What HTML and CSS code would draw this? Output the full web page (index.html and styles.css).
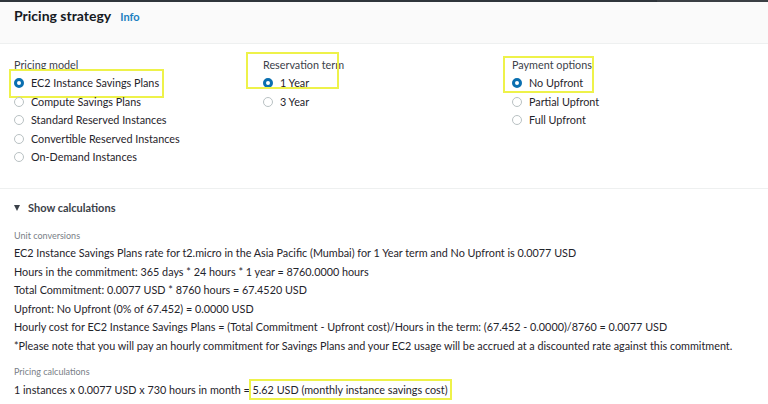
FILE: index.html
```html
<!DOCTYPE html>
<html>
<head>
<meta charset="utf-8">
<link rel="stylesheet" href="styles.css">
</head>
<body>
<div class="topbar"><span class="topbar-end"></span></div>
<div class="page">
  <div class="main">
    <header class="head">
      <h2 class="title">Pricing strategy</h2>
      <a class="info">Info</a>
    </header>
    <section class="options">
      <div class="col">
        <div class="label">Pricing model</div>
        <div class="radio sel mark-ec2"><span class="dot"></span>EC2 Instance Savings Plans</div>
        <div class="radio"><span class="dot"></span>Compute Savings Plans</div>
        <div class="radio"><span class="dot"></span>Standard Reserved Instances</div>
        <div class="radio"><span class="dot"></span>Convertible Reserved Instances</div>
        <div class="radio"><span class="dot"></span>On-Demand Instances</div>
      </div>
      <div class="col">
        <span class="mark mark-term"></span>
        <div class="label">Reservation term</div>
        <div class="radio sel"><span class="dot"></span>1 Year</div>
        <div class="radio"><span class="dot"></span>3 Year</div>
      </div>
      <div class="col">
        <span class="mark mark-pay"></span>
        <div class="label">Payment options</div>
        <div class="radio sel"><span class="dot"></span>No Upfront</div>
        <div class="radio"><span class="dot"></span>Partial Upfront</div>
        <div class="radio"><span class="dot"></span>Full Upfront</div>
      </div>
    </section>
    <section class="calc">
      <div class="toggle"><span class="caret"></span>Show calculations</div>
      <div class="small">Unit conversions</div>
      <p class="line">EC2 Instance Savings Plans rate for t2.micro in the Asia Pacific (Mumbai) for 1 Year term and No Upfront is 0.0077 USD</p>
      <p class="line">Hours in the commitment: 365 days * 24 hours * 1 year = 8760.0000 hours</p>
      <p class="line">Total Commitment: 0.0077 USD * 8760 hours = 67.4520 USD</p>
      <p class="line">Upfront: No Upfront (0% of 67.452) = 0.0000 USD</p>
      <p class="line">Hourly cost for EC2 Instance Savings Plans = (Total Commitment - Upfront cost)/Hours in the term: (67.452 - 0.0000)/8760 = 0.0077 USD</p>
      <p class="line">*Please note that you will pay an hourly commitment for Savings Plans and your EC2 usage will be accrued at a discounted rate against this commitment.</p>
      <div class="small gap">Pricing calculations</div>
      <p class="line">1 instances x 0.0077 USD x 730 hours in month = <span class="mark-result">5.62 USD (monthly instance savings cost)</span></p>
    </section>
  </div>
  <div class="scroll"></div>
</div>
</body>
</html>
```
FILE: styles.css
```css
* { box-sizing: border-box; }
html, body { margin: 0; padding: 0; }
body {
  width: 768px;
  height: 404px;
  overflow: hidden;
  background: #ffffff;
  font-family: Lato, "Open Sans", sans-serif;
  color: #16191f;
}
.topbar {
  height: 2px;
  background: #2f353b;
  display: flex;
  justify-content: flex-end;
  overflow: visible;
}
.topbar-end {
  width: 111px;
  height: 3px;
  background: #3a3f44;
  box-shadow: 0 1px 2px rgba(0, 0, 0, 0.25);
}
.page {
  display: flex;
  height: 402px;
}
.main {
  flex: 1;
  display: flex;
  flex-direction: column;
}
.scroll {
  width: 8px;
  background: #f1f1f1;
  border-left: 1px solid #e3e3e3;
}
.head {
  height: 42px;
  background: #fafafa;
  border-bottom: 1px solid #eef0f0;
  display: flex;
  align-items: baseline;
  padding: 5px 14px 0;
  gap: 9px;
}
.title {
  margin: 0;
  font-size: 14px;
  font-weight: 700;
  line-height: 18px;
}
.info {
  font-size: 11px;
  font-weight: 700;
  color: #1a7fc1;
}
.options {
  display: grid;
  grid-template-columns: repeat(3, 249px);
  padding: 12px 14px 0;
  height: 145px;
  border-bottom: 1px solid #eef0f0;
}
.col {
  position: relative;
  display: flex;
  flex-direction: column;
  align-items: flex-start;
}
.label {
  font-size: 10.8px;
  line-height: 18px;
  color: #3b4149;
}
.radio {
  display: flex;
  align-items: center;
  gap: 7px;
  font-size: 10.8px;
  line-height: 18.5px;
  color: #1f242b;
}
.dot {
  width: 10px;
  height: 10px;
  border-radius: 50%;
  border: 1px solid #b9c1c3;
  background: #fff;
}
.sel .dot {
  border: 3px solid #0a6fb0;
}
.mark-ec2 {
  outline: 2px solid #eef24a;
  outline-offset: 3px;
}
.mark {
  position: absolute;
  border: 2px solid #eef24a;
  pointer-events: none;
}
.mark-term {
  left: -17px;
  top: -4px;
  width: 93px;
  height: 37px;
}
.mark-pay {
  left: -9px;
  top: 0;
  width: 91px;
  height: 37px;
}
.calc {
  padding: 10px 14px 0;
}
.toggle {
  display: flex;
  align-items: center;
  gap: 8px;
  font-size: 11px;
  font-weight: 700;
  color: #3b4149;
  line-height: 18px;
}
.caret {
  width: 0;
  height: 0;
  border-left: 3.5px solid transparent;
  border-right: 3.5px solid transparent;
  border-top: 6px solid #3b4149;
}
.small {
  font-size: 9px;
  color: #7a8087;
  line-height: 16px;
  margin-top: 11px;
}
.small.gap {
  margin-top: 7px;
  line-height: 18px;
}
.line {
  margin: 0;
  font-size: 10.8px;
  line-height: 18.6px;
  color: #1f242b;
}
.mark-result {
  outline: 2px solid #eef24a;
  outline-offset: 2px;
}
```
